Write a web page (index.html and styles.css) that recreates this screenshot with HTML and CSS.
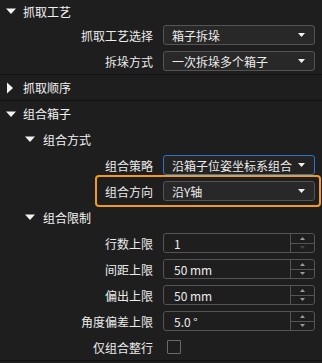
FILE: index.html
```html
<!DOCTYPE html>
<html lang="zh">
<head>
<meta charset="utf-8">
<link rel="stylesheet" href="styles.css">
</head>
<body>
<div class="panel">
  <div class="header first">
    <svg class="caret" width="10" height="12" viewBox="0 0 10 12"><path d="M0 3.5 H10 L5 9 Z" fill="#f2f2f2"/></svg>
    <span>抓取工艺</span>
  </div>
  <div class="row">
    <span class="label">抓取工艺选择</span>
    <div class="combo"><span>箱子拆垛</span><svg width="7" height="4" viewBox="0 0 7 4"><path d="M0 0 H7 L3.5 4 Z" fill="#f2f2f2"/></svg></div>
  </div>
  <div class="row">
    <span class="label">拆垛方式</span>
    <div class="combo"><span>一次拆垛多个箱子</span><svg width="7" height="4" viewBox="0 0 7 4"><path d="M0 0 H7 L3.5 4 Z" fill="#f2f2f2"/></svg></div>
  </div>

  <div class="header sep">
    <svg class="caret" width="10" height="12" viewBox="0 0 10 12"><path d="M1 0.5 V11.5 L7 6 Z" fill="#f2f2f2"/></svg>
    <span>抓取顺序</span>
  </div>

  <div class="header sep">
    <svg class="caret" width="10" height="12" viewBox="0 0 10 12"><path d="M0 3.5 H10 L5 9 Z" fill="#f2f2f2"/></svg>
    <span>组合箱子</span>
  </div>
  <div class="header sub">
    <svg class="caret" width="10" height="12" viewBox="0 0 10 12"><path d="M0 3.5 H10 L5 9 Z" fill="#f2f2f2"/></svg>
    <span>组合方式</span>
  </div>
  <div class="row">
    <span class="label">组合策略</span>
    <div class="combo focus"><span>沿箱子位姿坐标系组合</span><svg width="7" height="4" viewBox="0 0 7 4"><path d="M0 0 H7 L3.5 4 Z" fill="#f2f2f2"/></svg></div>
  </div>
  <div class="row highlight">
    <span class="label">组合方向</span>
    <div class="combo"><span>沿Y轴</span><svg width="7" height="4" viewBox="0 0 7 4"><path d="M0 0 H7 L3.5 4 Z" fill="#f2f2f2"/></svg></div>
  </div>
  <div class="header sub">
    <svg class="caret" width="10" height="12" viewBox="0 0 10 12"><path d="M0 3.5 H10 L5 9 Z" fill="#f2f2f2"/></svg>
    <span>组合限制</span>
  </div>
  <div class="row">
    <span class="label">行数上限</span>
    <div class="spin"><span class="value">1</span><div class="btns"><div class="btn"><svg width="5" height="3" viewBox="0 0 5 3"><path d="M0 3 H5 L2.5 0 Z" fill="#9a9a9a"/></svg></div><div class="btn"><svg width="5" height="3" viewBox="0 0 5 3"><path d="M0 0 H5 L2.5 3 Z" fill="#444"/></svg></div></div></div>
  </div>
  <div class="row">
    <span class="label">间距上限</span>
    <div class="spin"><span class="value">50 mm</span><div class="btns"><div class="btn"><svg width="5" height="3" viewBox="0 0 5 3"><path d="M0 3 H5 L2.5 0 Z" fill="#9a9a9a"/></svg></div><div class="btn"><svg width="5" height="3" viewBox="0 0 5 3"><path d="M0 0 H5 L2.5 3 Z" fill="#9a9a9a"/></svg></div></div></div>
  </div>
  <div class="row">
    <span class="label">偏出上限</span>
    <div class="spin"><span class="value">50 mm</span><div class="btns"><div class="btn"><svg width="5" height="3" viewBox="0 0 5 3"><path d="M0 3 H5 L2.5 0 Z" fill="#9a9a9a"/></svg></div><div class="btn"><svg width="5" height="3" viewBox="0 0 5 3"><path d="M0 0 H5 L2.5 3 Z" fill="#9a9a9a"/></svg></div></div></div>
  </div>
  <div class="row">
    <span class="label">角度偏差上限</span>
    <div class="spin"><span class="value">5.0 °</span><div class="btns"><div class="btn"><svg width="5" height="3" viewBox="0 0 5 3"><path d="M0 3 H5 L2.5 0 Z" fill="#9a9a9a"/></svg></div><div class="btn"><svg width="5" height="3" viewBox="0 0 5 3"><path d="M0 0 H5 L2.5 3 Z" fill="#9a9a9a"/></svg></div></div></div>
  </div>
  <div class="row last">
    <span class="label">仅组合整行</span>
    <span class="check"></span>
  </div>
</div>
</body>
</html>
```

FILE: styles.css
```css
html, body {
  margin: 0;
  padding: 0;
  background: #1e1e1e;
}
body {
  width: 322px;
  height: 363px;
  overflow: hidden;
  font-family: "Noto Sans CJK SC", "Noto Sans", sans-serif;
  font-size: 12px;
  color: #ececec;
}
.panel {
  display: flex;
  flex-direction: column;
}
.header {
  display: flex;
  align-items: center;
  gap: 7px;
  height: 25px;
  padding-left: 6px;
  color: #f2f2f2;
}
.header.first {
  height: 22px;
}
.header.sep {
  border-top: 1px solid #111;
}
.header.sub {
  height: 26px;
  padding-left: 25px;
  gap: 8px;
}
.caret {
  flex: none;
}
.row {
  display: flex;
  align-items: center;
  height: 26px;
  position: relative;
}
.row.last {
  border-bottom: 1px solid #111;
}
.label {
  width: 153px;
  text-align: right;
  flex: none;
  margin-right: 10px;
  white-space: nowrap;
}
.combo {
  width: 152px;
  height: 20px;
  box-sizing: border-box;
  border: 1px solid #545454;
  border-radius: 3px;
  background: #282828;
  display: flex;
  align-items: center;
  justify-content: space-between;
  padding: 0 9px 0 8px;
  white-space: nowrap;
}
.combo.focus {
  border-color: #2b74c9;
  background: #232323;
}
.highlight::after {
  content: "";
  position: absolute;
  left: 95px;
  right: 1px;
  top: -3px;
  bottom: -3px;
  border: 2px solid #f29a1c;
  border-radius: 4px;
  pointer-events: none;
}
.spin {
  width: 152px;
  height: 20px;
  box-sizing: border-box;
  border: 1px solid #545454;
  border-radius: 3px;
  display: flex;
  background: #1e1e1e;
}
.value {
  flex: 1;
  display: flex;
  align-items: center;
  padding-left: 10px;
}
.btns {
  width: 23px;
  border-left: 1px solid #545454;
  display: flex;
  flex-direction: column;
}
.btn {
  flex: 1;
  display: flex;
  align-items: center;
  justify-content: center;
}
.btn + .btn {
  border-top: 1px solid #545454;
}
.check {
  width: 14px;
  height: 14px;
  box-sizing: border-box;
  border: 1px solid #6a6a6a;
  border-radius: 1px;
  margin-left: 4px;
}
```
